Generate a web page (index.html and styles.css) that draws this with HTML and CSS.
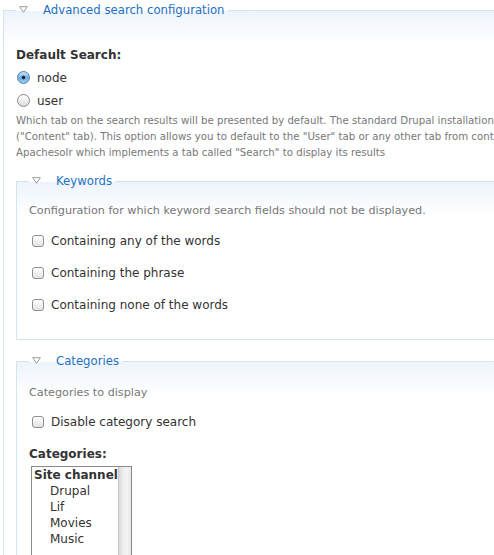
FILE: index.html
```html
<!DOCTYPE html>
<html>
<head>
<meta charset="utf-8">
<title>Advanced search configuration</title>
<link rel="stylesheet" href="styles.css">
</head>
<body>
<div class="page">
  <fieldset class="box box-outer">
    <legend class="box-title">
      <svg class="toggle" width="9" height="7" viewBox="0 0 9 7"><polygon points="0.7,0.7 8.3,0.7 4.5,6.3" fill="#fff" stroke="#9a9a9a" stroke-width="1"/></svg>
      <span>Advanced search configuration</span>
    </legend>

    <div class="form-item default-search">
      <div class="field-label">Default Search:</div>
      <label class="choice radio-row"><input type="radio" name="default" checked> <span>node</span></label>
      <label class="choice radio-row"><input type="radio" name="default"> <span>user</span></label>
      <div class="help">Which tab on the search results will be presented by default. The standard Drupal installation defaults to node_search<br>("Content" tab). This option allows you to default to the "User" tab or any other tab from contributed search modules, such as<br>Apachesolr which implements a tab called "Search" to display its results</div>
    </div>

    <fieldset class="box box-inner keywords">
      <legend class="box-title">
        <svg class="toggle" width="9" height="7" viewBox="0 0 9 7"><polygon points="0.7,0.7 8.3,0.7 4.5,6.3" fill="#fff" stroke="#9a9a9a" stroke-width="1"/></svg>
        <span>Keywords</span>
      </legend>
      <div class="intro">Configuration for which keyword search fields should not be displayed.</div>
      <label class="choice check-row"><input type="checkbox"> <span>Containing any of the words</span></label>
      <label class="choice check-row"><input type="checkbox"> <span>Containing the phrase</span></label>
      <label class="choice check-row"><input type="checkbox"> <span>Containing none of the words</span></label>
    </fieldset>

    <fieldset class="box box-inner categories">
      <legend class="box-title">
        <svg class="toggle" width="9" height="7" viewBox="0 0 9 7"><polygon points="0.7,0.7 8.3,0.7 4.5,6.3" fill="#fff" stroke="#9a9a9a" stroke-width="1"/></svg>
        <span>Categories</span>
      </legend>
      <div class="intro intro-cat">Categories to display</div>
      <label class="choice check-row cat-check"><input type="checkbox"> <span>Disable category search</span></label>
      <div class="field-label cat-label">Categories:</div>
      <div class="listbox" role="listbox" aria-multiselectable="true">
        <div class="list-items">
          <div class="group-label">Site channel</div>
          <div class="option" role="option">Drupal</div>
          <div class="option" role="option">Lif</div>
          <div class="option" role="option">Movies</div>
          <div class="option" role="option">Music</div>
        </div>
        <div class="scroll-track"></div>
      </div>
    </fieldset>
  </fieldset>
</div>
</body>
</html>
```

FILE: styles.css
```css
html, body {
  margin: 0;
  padding: 0;
  overflow: hidden;
  background: #fff;
}

.page {
  width: 494px;
  height: 555px;
  overflow: hidden;
  font-family: "DejaVu Sans", Verdana, sans-serif;
  font-size: 12px;
  color: #333;
}

.box {
  margin: 0;
  border: 1px solid #d6e4ee;
  background: linear-gradient(#edf4fb, #ffffff 34px);
  min-width: 0;
}

.box-outer {
  width: 700px;
  margin-left: 3px;
  padding: 0 12px 20px 12px;
}

.box-inner {
  width: 640px;
  padding: 0 12px 24px 12px;
  margin-top: 10px;
}

.box-inner.categories {
  margin-top: 11px;
}

.box-title {
  display: flex;
  align-items: center;
  height: 20px;
  padding: 0 3px;
  font-size: 11.7px;
  color: #1f6fc4;
}

.toggle {
  display: block;
  margin-right: 15px;
  margin-top: -1px;
}

.form-item {
  margin-top: 27px;
}

.field-label {
  font-weight: bold;
  line-height: 16px;
  color: #333;
}

.choice {
  display: flex;
  align-items: center;
  color: #333;
}

.radio-row {
  height: 23px;
}

.radio-row:first-of-type {
  margin-top: 3px;
}

.check-row {
  height: 20px;
  margin-top: 12px;
}

.choice span {
  line-height: 16px;
}

input[type="radio"] {
  -webkit-appearance: none;
  appearance: none;
  width: 13px;
  height: 13px;
  margin: 0 7px 0 1px;
  border: 1px solid #8c8c8c;
  border-radius: 50%;
  background: linear-gradient(#ffffff, #dcdcdc);
  box-sizing: border-box;
  flex: none;
}

input[type="radio"]:checked {
  border-color: #5a7fa6;
  background: radial-gradient(circle at 50% 50%, #1d2a3a 0, #1d2a3a 1.6px, transparent 2.2px),
              linear-gradient(#c9e3f9, #6aaee9 55%, #9ccff5);
}

input[type="checkbox"] {
  -webkit-appearance: none;
  appearance: none;
  width: 12px;
  height: 12px;
  margin: 0 7px 0 3px;
  border: 1px solid #8f8f8f;
  border-radius: 3px;
  background: linear-gradient(#ffffff, #e2e2e2);
  box-sizing: border-box;
  flex: none;
}

.help {
  margin-top: 1px;
  font-size: 10.2px;
  line-height: 16px;
  color: #777;
  white-space: nowrap;
}

.intro {
  margin-top: 12px;
  font-size: 11.2px;
  line-height: 16px;
  color: #777;
}

.intro-cat {
  margin-top: 14px;
}

.cat-check {
  margin-top: 11px;
}

.cat-label {
  margin-top: 14px;
}

.listbox {
  display: flex;
  width: 101px;
  height: 120px;
  margin: 4px 0 0 2px;
  border: 1px solid #8a8a8a;
  box-sizing: border-box;
  background: #fff;
}

.list-items {
  flex: 1;
  padding-left: 2px;
  line-height: 16px;
  color: #333;
  white-space: nowrap;
  overflow: hidden;
}

.group-label {
  font-weight: bold;
}

.option {
  padding-left: 16px;
}

.scroll-track {
  width: 13px;
  flex: none;
  background: linear-gradient(to right, #b9b9b9 0, #d9d9d9 1px, #ececec 5px, #f4f4f4 9px, #e6e6e6 13px);
}
```
